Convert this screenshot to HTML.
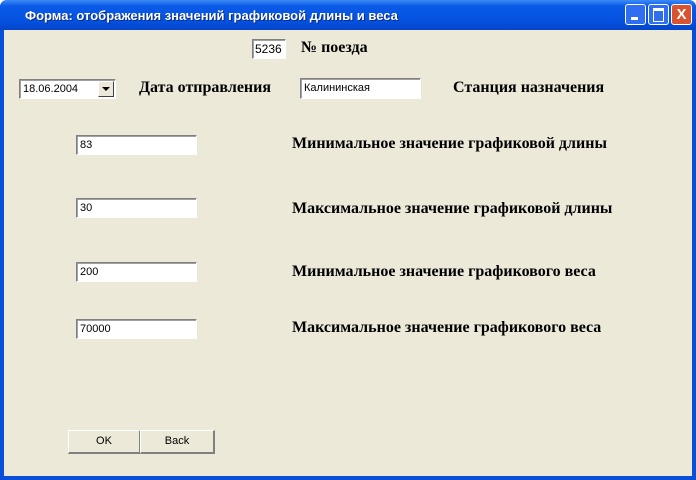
<!DOCTYPE html>
<html><head><meta charset="utf-8"><style>
body{margin:0;width:696px;height:480px;overflow:hidden;font-family:"Liberation Sans",sans-serif}
.win{position:absolute;left:0;top:0;width:696px;height:480px;background:#0a4fd8;border-radius:7px 7px 0 0}
.title{position:absolute;left:0;top:0;width:696px;height:30px;border-radius:7px 7px 0 0;background:linear-gradient(#3d8cf5,#0a5ae8 20%,#0552e0 70%,#0444c8)}
.title span{position:absolute;left:25px;top:8px;color:#fff;font-weight:bold;font-size:13px;text-shadow:1px 1px #0a2a80}
.client{position:absolute;left:4px;top:30px;width:688px;height:446px;background:#ece9d8}
.tb{position:absolute;background:#fff;border-top:1px solid #808080;border-left:1px solid #808080;border-right:1px solid #fff;border-bottom:1px solid #fff;box-shadow:inset 1px 1px #a0a0a0;font-size:11px;line-height:18px;padding-left:3px;box-sizing:border-box}
.lb{position:absolute;font-family:"Liberation Serif",serif;font-weight:bold;font-size:16px;line-height:18px}
.btn{position:absolute;top:430px;height:24px;background:#ece9d8;border-top:1px solid #fff;border-left:1px solid #fff;border-right:2px solid #808080;border-bottom:2px solid #808080;box-sizing:border-box;font-size:11px;text-align:center;line-height:21px}
.cb{position:absolute;width:21px;height:21px;top:4px;border-radius:3px;border:1px solid #fff;box-sizing:border-box}
</style></head><body>
<div class="win"><div class="title"><span>Форма: отображения значений графиковой длины и веса</span>
<div class="cb" style="left:625px;background:#2f6ef0"><div style="position:absolute;left:5px;top:12px;width:7px;height:3px;background:#fff"></div></div>
<div class="cb" style="left:648px;background:#2f6ef0"><div style="position:absolute;left:4px;top:3px;width:9px;height:10px;border:1px solid #fff;border-top:3px solid #fff"></div></div>
<div class="cb" style="left:671px;background:#d9532f;color:#fff;font-weight:bold;font-size:15px;text-align:center;line-height:19px">X</div>
</div>
<div class="client"></div></div>
<div class="tb" style="left:252px;top:39px;width:34px;height:20px;font-size:12px;padding-left:2px">5236</div>
<div class="lb" style="left:301px;top:39px">№ поезда</div>
<div class="tb" style="left:19px;top:79px;width:97px;height:20px">18.06.2004
<div style="position:absolute;right:1px;top:1px;width:16px;height:16px;background:#ece9d8;border-top:1px solid #fff;border-left:1px solid #fff;border-right:1px solid #404040;border-bottom:1px solid #404040;box-sizing:border-box"><div style="position:absolute;left:3px;top:5px;border-left:4px solid transparent;border-right:4px solid transparent;border-top:4px solid #000"></div></div></div>
<div class="lb" style="left:139px;top:79px">Дата отправления</div>
<div class="tb" style="left:300px;top:78px;width:121px;height:21px">Калининская</div>
<div class="lb" style="left:453px;top:79px">Станция назначения</div>
<div class="tb" style="left:76px;top:135px;width:121px;height:20px">83</div>
<div class="lb" style="left:292px;top:135px">Минимальное значение графиковой длины</div>
<div class="tb" style="left:76px;top:198px;width:121px;height:20px">30</div>
<div class="lb" style="left:292px;top:200px">Максимальное значение графиковой длины</div>
<div class="tb" style="left:76px;top:262px;width:121px;height:20px">200</div>
<div class="lb" style="left:292px;top:263px">Минимальное значение графикового веса</div>
<div class="tb" style="left:76px;top:319px;width:121px;height:20px">70000</div>
<div class="lb" style="left:292px;top:319px">Максимальное значение графикового веса</div>
<div class="btn" style="left:68px;width:73px">OK</div>
<div class="btn" style="left:140px;width:75px">Back</div>
</body></html>
